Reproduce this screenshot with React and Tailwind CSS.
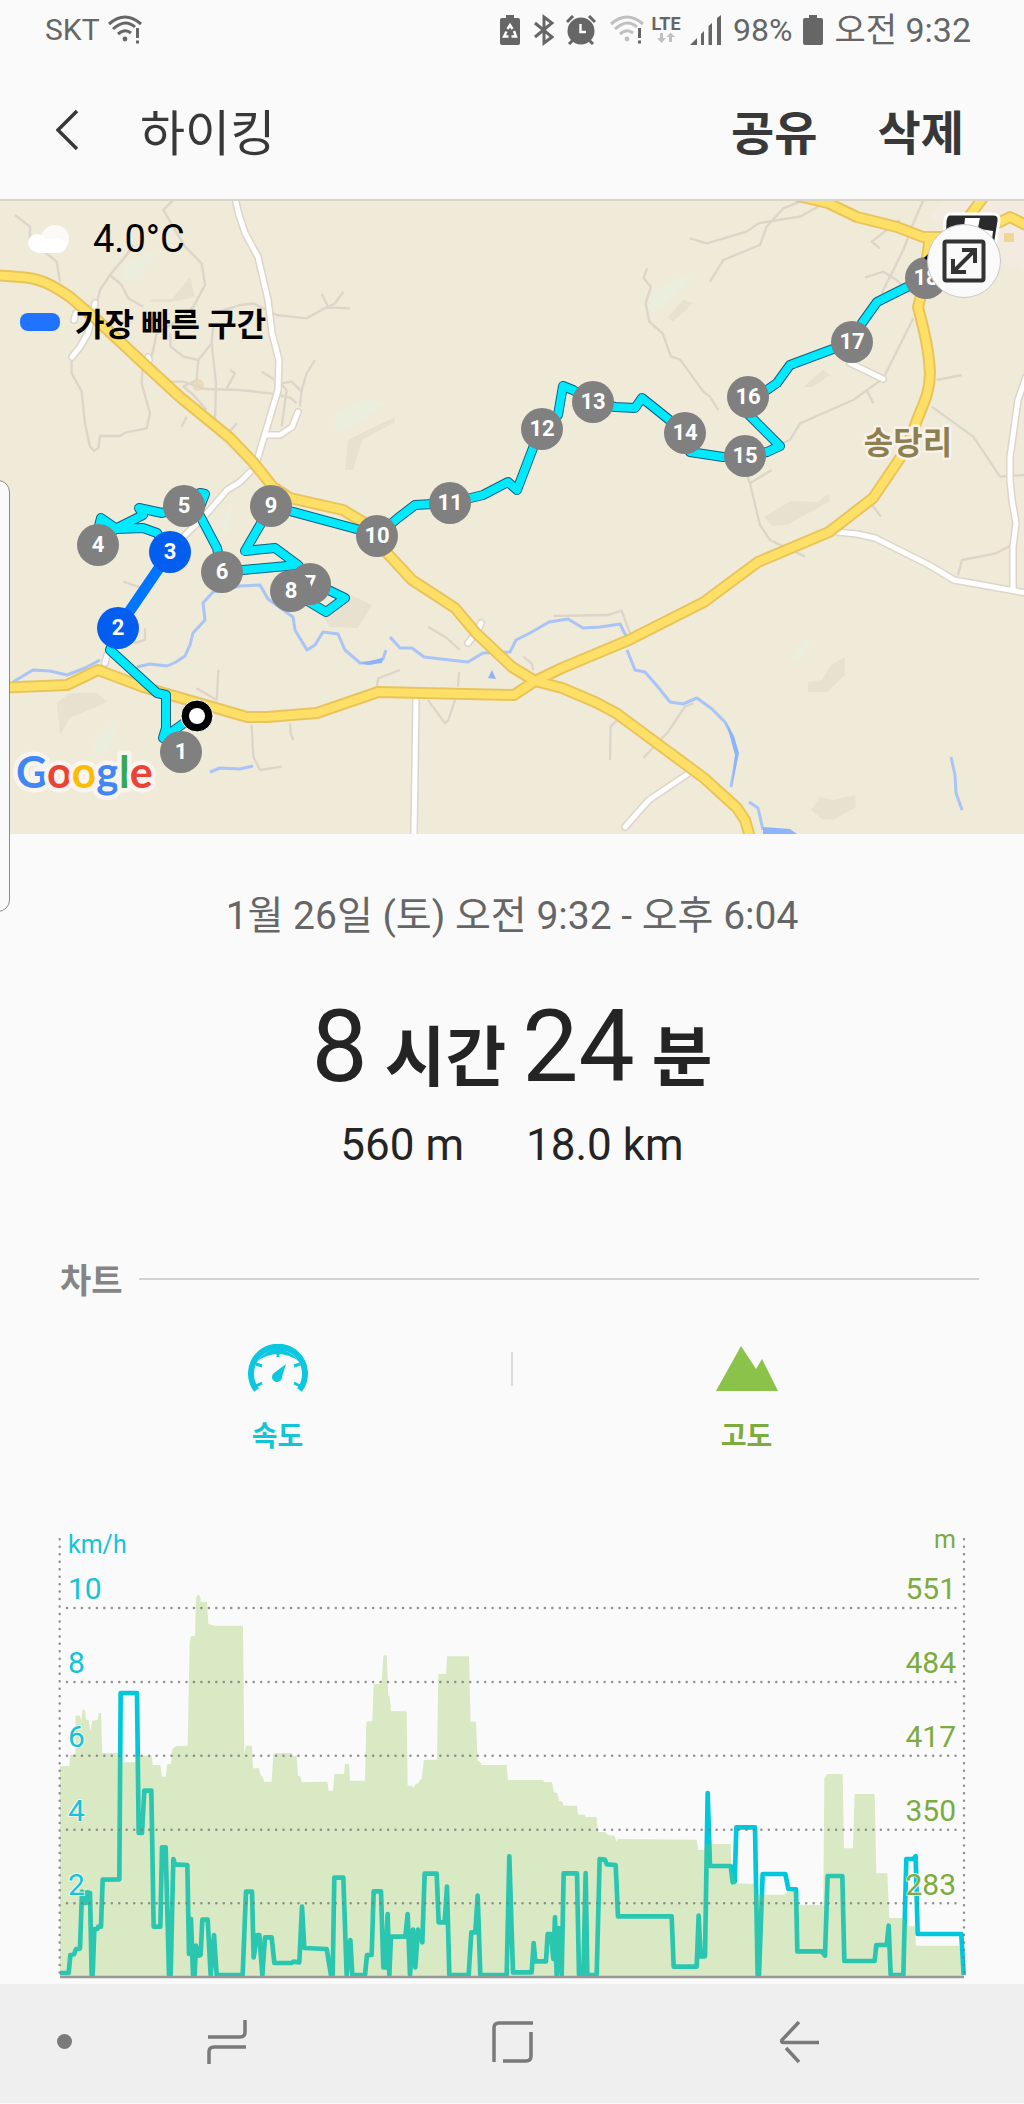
import React from "react";

const minorRoads = [
  "45,75 90,110 90,150 170,215 180,275",
  "520,30 490,60 520,110 555,170 605,220 615,285 580,350 545,385 470,430 455,500",
  "400,165 380,195 330,255 300,300 290,340",
  "330,255 365,285 385,325 430,350",
  "215,500 215,550 245,605 255,700 270,770 282,782 295,775 300,738 360,738 375,728 440,715 450,670 425,580 428,525",
  "640,370 720,345 760,340 830,375 920,385 980,352 1050,355",
  "965,312 985,352 1005,340 1030,305",
  "510,430 512,470 550,500 595,510 635,460 640,400",
  "635,460 648,580 645,690",
  "595,510 590,570 550,590 580,615 620,660",
  "500,575 550,575 615,597 720,600 810,610 870,622 890,640",
  "785,545 825,570",
  "945,510 920,550 905,600 900,650",
  "680,595 705,550 690,540",
  "710,700 685,730",
  "545,710 560,680",
  "845,710 860,600 840,580 875,575 905,605",
  "1941,235 1931,265 1953,290 1937,340 1948,395 1988,430 2013,500 2040,508 2110,605 2130,620 2155,660",
  "2220,800 2250,880 2280,1005 2310,1050 2415,1100",
  "2250,880 2315,840",
  "2070,145 2120,160 2240,125 2275,100 2335,90 2400,80 2480,35",
  "2130,275 2170,210 2280,165 2300,110 2350,55 2400,35",
  "2770,30 2740,100 2710,180 2670,260 2645,310",
  "2595,262 2650,245 2690,270 2730,310",
  "2640,175 2615,155 2660,120 2700,90",
  "2740,385 2650,565 2560,630 2400,700 2370,750 2335,765",
  "2600,600 2620,640",
  "2810,570 2885,555",
  "2795,650 2920,740 3000,860 3072,855",
  "1660,1278 1825,1275 1865,1262 1890,1330",
  "1830,1710 1832,1610 1850,1592",
  "1930,1704 2004,1626 2055,1550 2080,1540",
  "1284,1530 1335,1600 1345,1590 1365,1530",
  "1377,1446 1374,1490",
  "1284,1310 1341,1345 1380,1380",
  "1570,1400 1595,1420 1600,1440",
  "2874,1155 2886,1110 2988,1090 3036,1065",
  "2616,945 2643,980",
  "755,1605 760,1700 780,1740 845,1730",
  "870,1600 872,1630 880,1650",
  "655,1440 650,1530 590,1495",
  "370,1175 420,1192",
  "435,1315 435,1350 400,1360",
  "1130,1490 1135,1465 1200,1440",
];

const tanPatches = [
  "190,277 195,297 172,302 150,302 152,299 172,299",
  "395,417 395,422 362,440 353,470 345,470 348,440 362,433",
  "683,300 693,303 673,322 668,317",
  "323,617 347,593 372,605 358,628 330,627",
  "57,703 70,693 97,693 107,702 70,718 60,735",
  "764,517 791,501 818,502 828,494 830,501 787,525 772,526",
  "808,682 822,680 831,665 845,657 845,675 827,692 808,692",
  "811,810 820,797 833,800 855,795 856,807 833,820 822,819",
  "803,387 823,370 830,375 813,387",
];

const greenPatches = [
  "333,423 337,413 367,400 388,402 367,417 337,433",
  "123,277 127,263 147,253 160,250 133,282",
  "647,307 653,293 680,275 695,277 650,318",
  "223,520 232,500 230,530 221,538",
  "95,740 115,722 118,728 108,752 92,754",
  "792,655 806,640 812,642 797,662",
];

const rivers = [
  "13,682 33,670 50,671 67,675 85,668 100,660",
  "137,667 150,664 167,666 176,662 185,656 190,645 193,633 205,620 203,603 213,592 228,589 240,586 260,585 268,599 293,617 295,630 307,650 315,645 323,632 338,634 345,650 360,663 372,663 383,659 386,650",
  "390,637 400,648 412,648 424,657 450,660 468,662 483,653 510,652 516,640 530,633 549,622 568,619 583,628 600,627 620,624 628,640",
  "627,650 635,670 645,672 658,687 670,702 683,704 697,698 712,709 725,722 733,737 737,753 731,787",
  "749,802 758,808 763,830",
  "951,757 955,775 956,793 962,810",
  "210,772 220,768 240,769 253,766",
];

const whiteRoads = [
  "235,198 239,215 245,233 258,257 268,300 272,333 279,360 278,390 267,427 255,467",
  "250,472 240,482 227,490 203,518 183,537",
  "267,435 280,435 292,427 298,412",
  "95,303 88,333 80,347 72,357",
  "74,320 76,313",
  "148,357 149,360",
  "107,655 105,663",
  "837,532 857,534 875,538 929,565 954,580 1026,593",
  "1026,377 1018,400 1010,457 1010,480 1012,500 1016,523 1013,547 1013,590",
  "416,699 414,836",
  "689,773 649,800 625,827",
  "850,363 883,379",
  "481,623 479,628",
  "468,643 472,638",
];

const yellowRoads = [
  "M-5 275L20 277C38 278 50 283 70 297L97 320L143 363L180 397L230 438L253 462L273 487L290 498L343 510L363 522L387 553L412 580L455 608L476 633L512 667L535 681L562 688L595 702L616 713L662 747L704 778L737 808L745 820L751 840",
  "M-5 688L67 685L98 670L143 687L247 717L267 717L317 713L378 692L514 695L535 681L562 668L629 640L704 602L758 562L829 532L873 498L907 448L917 420C923 405 930 392 930 373C929 350 924 330 918 307L922 292L930 237",
  "M798 196L828 203L857 217L897 227L923 237L942 237L1000 222L1010 217L1030 227",
  "M985 195L965 222",
];

const routeStart =
  "M194 716L163 738L166 728L166 695L157 693L110 650L118 628";
const routeRest =
  "M170 552L157 533L143 528L117 529L101 518L98 530M98 545L115 529L143 515L139 508L162 513L184 506L200 493L205 494L198 512L217 548L222 572L243 570L298 565L310 581L345 598L326 612L291 591M298 565L275 548L245 551L271 506L360 530L377 536L398 518L415 505L450 503L483 495L508 482L517 490L533 448L542 429L558 415L563 386L573 390L593 402L615 407L635 408L642 398L667 418L685 433L690 452L723 457L745 456L767 452L780 446L748 414L748 397L767 390L777 383L790 365L833 349L852 342L862 323L877 302L907 287L926 278";

const markers = [
  [1, 181, 752],
  [2, 118, 628, true],
  [3, 170, 552, true],
  [4, 98, 545],
  [5, 184, 506],
  [6, 222, 572],
  [7, 310, 584],
  [8, 291, 591],
  [9, 271, 506],
  [10, 377, 536],
  [11, 450, 503],
  [12, 542, 429],
  [13, 593, 402],
  [14, 685, 433],
  [16, 748, 397],
  [15, 745, 456],
  [17, 852, 342],
  [18, 926, 278],
];

function MapDrawing() {
  return (
    <svg viewBox="0 199 1024 635" className="block h-auto w-full" role="img" aria-label="하이킹 경로 지도">
      <rect x="0" y="199" width="1024" height="635" fill="#f0ead8" />
      <path d="M945 199H1024V272L1000 262L985 240L950 225L930 218Z" fill="#f4ebe0" />
      {tanPatches.map((p) => (
        <polygon key={p} points={p} fill="#e8e1cf" />
      ))}
      {greenPatches.map((p) => (
        <polygon key={p} points={p} fill="#ebeedd" />
      ))}
      <circle cx="198" cy="385" r="6" fill="#eadbb8" />
      <rect x="1004" y="233" width="10" height="9" fill="#f0d595" />
      <g transform="translate(0 190) scale(0.33333)" fill="none" stroke="#ddd5ca" strokeWidth="7" strokeLinejoin="round">
        {minorRoads.map((p) => (
          <polyline key={p} points={p} />
        ))}
      </g>
      <g fill="none" stroke="#a9c4f6" strokeWidth="3" strokeLinejoin="round">
        {rivers.map((p) => (
          <polyline key={p} points={p} />
        ))}
      </g>
      <path d="M726 722L734 737L739 753L732 785L735 755ZM763 827L790 829L797 834H763ZM492 670L496 679L488 678ZM360 663L383 658L382 663L368 665Z" fill="#8db4fb" />
      <g fill="none" strokeLinejoin="round" strokeLinecap="round">
        <g stroke="#ddd5ca" strokeWidth="8">
          {whiteRoads.map((p) => (
            <polyline key={p} points={p} />
          ))}
        </g>
        <g stroke="#ffffff" strokeWidth="5">
          {whiteRoads.map((p) => (
            <polyline key={p} points={p} />
          ))}
        </g>
        <g stroke="#e9c45c" strokeWidth="12">
          {yellowRoads.map((d) => (
            <path key={d} d={d} />
          ))}
        </g>
        <g stroke="#ffe067" strokeWidth="8">
          {yellowRoads.map((d) => (
            <path key={d} d={d} />
          ))}
        </g>
        <path d={routeStart + routeRest} stroke="#0d5f80" strokeWidth="10" />
        <path d={routeStart + routeRest} stroke="#00e9ff" strokeWidth="8" />
        <path d="M118 628L170 552" stroke="#0075ff" strokeWidth="11" />
      </g>
      <path d="M0 200H1024" stroke="#d9d4c6" strokeWidth="2" />
      <text x="908" y="454" textAnchor="middle" fontSize="32" fontWeight="700" fill="#8d7f52" stroke="#f8f3e8" strokeWidth="5" strokeLinejoin="round" paintOrder="stroke" className="font-['Noto_Sans_CJK_KR',sans-serif]">
        송당리
      </text>
      <g fontSize="22" fontWeight="700" textAnchor="middle" className="font-[Roboto,sans-serif]">
        {markers.map(([n, x, y, fast]) => (
          <g key={n}>
            <circle cx={x} cy={y} r="21" fill={fast ? "#035ef0" : "#808080"} />
            <text x={x} y={y + 7} fill="#ffffff">
              {n}
            </text>
          </g>
        ))}
      </g>
      <circle cx="197" cy="716" r="16" fill="#000" stroke="#fff" strokeWidth="1" />
      <circle cx="197" cy="716" r="8" fill="#fff" />
      <g>
        <path d="M950 214H993Q1000 214 999 221L995 246H944L945 221Q946 214 950 214Z" fill="#2a2a2a" stroke="#fff" strokeWidth="3" />
        <path d="M965 218H980L978 228H964ZM980 229L993 231L992 240L978 238Z" fill="#fff" />
        <path d="M924 258L930 252V262Z" fill="#000" />
      </g>
      <text x="16" y="788" fontSize="43" stroke="#f9f5ee" strokeWidth="9" strokeLinejoin="round" paintOrder="stroke" fontWeight="700" className="font-[Lato,sans-serif]">
        <tspan fill="#4285f4">G</tspan>
        <tspan fill="#ea4335">o</tspan>
        <tspan fill="#fbbc05">o</tspan>
        <tspan fill="#4285f4">g</tspan>
        <tspan fill="#34a853">l</tspan>
        <tspan fill="#ea4335">e</tspan>
      </text>
    </svg>
  );
}

function WifiAlert({ tone, className }) {
  return (
    <svg viewBox="0 0 34 30" className={className} fill="none" strokeWidth="3">
      <g stroke={tone}>
        <path d="M1 9Q17 -5 33 9" />
        <path d="M5 14Q17 3 27 12" />
        <path d="M10 19Q17 13 23 18" />
      </g>
      <circle cx="17" cy="24" r="2.4" fill={tone} />
      <path d="M29.500 13V23M29.500 25.500V28.500" stroke="#666" />
    </svg>
  );
}

function StatusBar() {
  return (
    <div className="flex h-[60px] items-center justify-between pr-[53px] pl-[45px] font-[Roboto,'Noto_Sans_CJK_KR',sans-serif] text-[#666]">
      <div className="flex items-center gap-2">
        <span className="text-[30px] leading-10">SKT</span>
        <WifiAlert tone="#666" className="h-[30px] w-[34px]" />
      </div>
      <div className="flex items-center">
        <svg viewBox="0 0 20 30" className="mr-[14px] h-[30px] w-5">
          <path d="M6 0H14V3H18Q20 3 20 5V28Q20 30 18 30H2Q0 30 0 28V5Q0 3 2 3H6Z" fill="#666" />
          <path d="M7.500 14L10 10L12.500 14M14 16L16 21.500H11.500M8.500 21.500H4L6.500 16.500" fill="none" stroke="#fff" strokeWidth="2.400" />
        </svg>
        <svg viewBox="0 0 20 32" className="mr-3 h-8 w-5" fill="none" stroke="#666" strokeWidth="3">
          <path d="M1 9L18 23L10 29V3L18 9L1 23" />
        </svg>
        <svg viewBox="0 0 30 30" className="mr-[14px] h-[30px] w-[30px]" fill="none" stroke="#666" strokeWidth="3">
          <circle cx="15" cy="16" r="13.500" fill="#666" stroke="none" />
          <path d="M1 7L7 1M29 7L23 1M3 29L7 25M27 29L23 25" />
          <path d="M14.500 9V17H20" stroke="#fff" strokeWidth="2.400" />
        </svg>
        <WifiAlert tone="#c0c0c0" className="mr-1.5 h-[30px] w-[34px]" />
        <span className="mr-2 flex w-8 flex-col items-center">
          <span className="text-[18px] leading-4 font-bold">LTE</span>
          <svg viewBox="0 0 18 12" className="h-3 w-[18px]" fill="#c0c0c0">
            <path d="M3 1H6V6H9L4.500 11L0 6H3Z M12 10V5H9.500L13.500 0.500L18 5H15V10Z" />
          </svg>
        </span>
        <svg viewBox="0 0 31 30" className="mr-3 h-[30px] w-[31px]" fill="#666">
          <path d="M0 30L7 23V30ZM11 19L14 16V30H11ZM18.500 11L22 8V30H18.500ZM27 3L31 0V30H27Z" />
        </svg>
        <span className="text-[32px] leading-10">98%</span>
        <svg viewBox="0 0 20 30" className="mx-[11px] h-[30px] w-5">
          <path d="M6 0H14V3H18Q20 3 20 5V28Q20 30 18 30H2Q0 30 0 28V5Q0 3 2 3H6Z" fill="#666" />
        </svg>
        <span className="text-[34px] leading-10 whitespace-nowrap">오전 9:32</span>
      </div>
    </div>
  );
}

function AppHeader() {
  return (
    <header className="flex h-[139px] items-center pr-[60px] pl-14 font-['Noto_Sans_CJK_KR',sans-serif] text-[#383838]">
      <button type="button" aria-label="뒤로" className="mr-[60px]">
        <svg viewBox="0 0 24 40" className="block h-10 w-6" fill="none" stroke="#383838" strokeWidth="3.500">
          <path d="M21 1L2 20L21 39" />
        </svg>
      </button>
      <h1 className="text-[49px] leading-[60px]">하이킹</h1>
      <div className="ml-auto flex gap-[60px] text-[47px] leading-[60px] font-bold">
        <button type="button">공유</button>
        <button type="button">삭제</button>
      </div>
    </header>
  );
}

function RouteMap() {
  return (
    <section className="relative">
      <MapDrawing />
      <div className="absolute top-4 left-5 flex flex-col gap-[35px] text-black">
        <div className="flex h-12 items-center gap-[23px] pl-2">
          <svg viewBox="0 0 42 28" className="h-7 w-[42px]" fill="#fff">
            <circle cx="27" cy="14" r="14" fill="#fbfaf7" />
            <circle cx="9" cy="18" r="9" />
            <rect x="4" y="14" width="34" height="14" rx="8" />
          </svg>
          <span className="font-[Roboto,sans-serif] text-[38px] leading-10">4.0°C</span>
        </div>
        <div className="flex h-12 items-center gap-[15px]">
          <span className="h-[18px] w-10 rounded-lg bg-[#2173ff]" />
          <span className="font-['Noto_Sans_CJK_KR',sans-serif] text-[32px] leading-10 font-bold whitespace-nowrap">가장 빠른 구간</span>
        </div>
      </div>
      <button
        type="button"
        aria-label="지도 확대"
        className="absolute top-[25px] right-[23px] flex size-[74px] items-center justify-center rounded-full border border-[#c9c9c9] bg-[#fafafa]"
      >
        <svg viewBox="0 0 44 44" className="size-11" fill="none" stroke="#333" strokeWidth="4">
          <rect x="2.500" y="2.500" width="39" height="39" rx="2" />
          <path d="M12 32L32 12M20 11H33V24M11 20V33H24" />
        </svg>
      </button>
      <div className="absolute top-[281px] -left-3 h-[432px] w-[22px] rounded-r-xl border border-[#8a8a88] bg-[#fafafa]" />
    </section>
  );
}

function Summary() {
  return (
    <section className="flex flex-col items-center font-[Roboto,'Noto_Sans_CJK_KR',sans-serif] text-[#242424]">
      <p className="mt-[58px] text-[39px] leading-[48px] text-[#666]">1월 26일 (토) 오전 9:32 - 오후 6:04</p>
      <p className="mt-[59px] flex h-24 items-baseline">
        <span className="text-[100px] leading-[96px]">8</span>
        <span className="ml-[17px] text-[66px] leading-[66px] font-bold">시간</span>
        <span className="ml-4 text-[100px] leading-[96px]">24</span>
        <span className="ml-[17px] text-[66px] leading-[66px] font-bold">분</span>
      </p>
      <p className="mt-6 flex gap-[62px] text-[44px] leading-[52px]">
        <span>560 m</span>
        <span>18.0 km</span>
      </p>
    </section>
  );
}

function ChartTabs() {
  return (
    <div className="font-['Noto_Sans_CJK_KR',sans-serif]">
      <div className="mt-[88px] flex items-center gap-4 pr-[45px] pl-[60px]">
        <h2 className="text-[34px] leading-10 font-bold text-[#858585]">차트</h2>
        <span className="h-0.5 flex-1 bg-[#d2d2d2]" />
      </div>
      <div className="mt-[45px] grid grid-cols-2 px-[43px] text-[28px] leading-10 font-bold">
        <button type="button" className="flex flex-col items-center gap-[22px] text-[#14c3d6]">
          <svg viewBox="0 0 60 48" className="h-12 w-[60px]" fill="none" stroke="#0cc8de">
            <path d="M8.500 46A27 27 0 1 1 51.500 46" strokeWidth="6" />
            <path d="M8 18Q30 -8 52 18Q30 2 8 18Z" fill="#0cc8de" stroke="none" />
            <path d="M30 4V13M8 20L14 22M52 20L46 22M8 42L14 39M52 42L46 39" strokeWidth="3" />
            <path d="M38 20L34 33A5 5 0 1 1 26 29Z" fill="#0cc8de" stroke="none" />
          </svg>
          <span>속도</span>
        </button>
        <button type="button" className="relative flex flex-col items-center gap-[22px] text-[#7cab3f]">
          <span className="absolute top-2 left-0 h-[34px] w-0.5 -translate-x-1/2 bg-[#dcdcdc]" />
          <svg viewBox="0 0 62 48" className="h-12 w-[62px]" fill="#8bc34a">
            <path d="M0 47L25 2L40 25L46 15L62 47Z" />
          </svg>
          <span>고도</span>
        </button>
      </div>
    </div>
  );
}

const altitude =
  "60,1374 60,742 88,740 90,708 106,706 106,590 120,590 124,605 128,572 135,572 138,602 146,602 151,635 157,605 173,602 177,582 183,582 187,702 240,702 243,730 288,730 290,710 335,710 338,738 361,738 366,773 377,773 382,735 393,735 397,690 408,681 443,680 449,370 453,352 465,350 468,235 474,226 480,232 483,248 501,248 505,315 525,320 609,320 613,705 618,680 636,680 639,748 657,748 661,767 668,773 672,788 695,788 700,705 706,702 754,702 757,712 770,712 774,770 782,773 785,790 862,788 866,815 879,815 883,765 912,765 915,735 927,735 930,785 975,785 979,608 997,606 1001,495 1025,495 1030,410 1040,408 1045,530 1049,530 1053,577 1100,577 1103,800 1115,800 1120,807 1125,797 1135,792 1140,782 1145,780 1152,722 1191,722 1195,465 1218,465 1221,412 1287,412 1292,608 1308,608 1313,725 1320,728 1325,738 1400,738 1404,783 1510,783 1512,790 1536,790 1542,820 1552,823 1557,845 1567,848 1571,860 1611,860 1614,887 1634,887 1637,894 1670,894 1674,938 1696,940 1702,948 1724,950 1729,967 1735,960 1970,962 1975,992 1992,993 1998,975 2072,975 2075,1050 2090,1093 2143,1095 2150,1127 2235,1127 2242,1118 2270,1118 2275,1158 2350,1158 2353,778 2362,765 2408,765 2412,988 2439,988 2444,825 2504,825 2509,1063 2542,1063 2548,1197 2590,1197 2605,1222 2625,1222 2628,1280 2758,1280 2772,1374";

const speed =
  "60,1362 86,1362 91,1308 102,1306 108,1290 120,1288 126,1118 132,1152 138,1152 141,1120 150,1122 155,1368 158,1368 163,1230 172,1230 175,1223 183,1223 188,1082 238,1081 242,522 291,522 296,942 306,942 313,815 334,815 341,1223 361,1223 366,985 377,985 387,1368 392,1368 400,1020 405,1036 442,1038 447,1305 453,1200 459,1368 464,1368 468,1280 475,1310 482,1308 487,1202 503,1202 512,1368 522,1248 530,1368 608,1368 618,1118 636,1118 641,1315 651,1248 658,1248 667,1368 675,1255 695,1255 703,1332 755,1332 760,1328 778,1330 786,1163 793,1287 860,1290 873,1368 878,1368 883,1076 910,1076 920,1368 931,1263 937,1368 975,1368 981,1308 995,1308 1001,1117 1023,1117 1030,1345 1036,1345 1043,1185 1048,1368 1053,1253 1096,1253 1103,1185 1110,1368 1119,1232 1126,1345 1134,1232 1147,1270 1154,1064 1190,1064 1196,1210 1214,1210 1221,1103 1228,1368 1286,1368 1294,1240 1306,1240 1313,1130 1321,1368 1400,1368 1408,1012 1419,1360 1475,1360 1481,1272 1486,1327 1518,1327 1523,1245 1533,1245 1540,1320 1545,1195 1550,1368 1556,1227 1565,1368 1571,1063 1611,1063 1617,1368 1630,1368 1637,1062 1642,1368 1670,1368 1679,1020 1695,1022 1700,1036 1727,1038 1734,1192 1895,1192 1901,1343 1970,1343 1976,1190 1982,1312 1995,1312 2003,822 2010,1041 2072,1041 2078,1090 2084,1088 2089,925 2145,925 2153,1368 2157,1368 2168,1065 2236,1065 2245,1110 2268,1111 2272,1297 2345,1297 2355,1310 2363,1071 2407,1071 2413,1326 2504,1326 2509,1278 2540,1278 2546,1220 2552,1368 2590,1368 2599,1020 2620,1020 2627,1012 2633,1245 2764,1245 2771,1368";

const ticks = [
  [1600, 10, 551],
  [1674, 8, 484],
  [1748, 6, 417],
  [1822, 4, 350],
  [1896, 2, 283],
];

function Chart() {
  return (
    <svg viewBox="0 1515 1024 470" className="mt-[60px] block h-auto w-full font-[Roboto,sans-serif]" role="img" aria-label="속도와 고도 차트">
      <g transform="translate(40 1520) scale(0.33333)">
        <polyline points={speed} fill="none" stroke="#00c8dc" strokeWidth="14" strokeLinejoin="round" />
        <polygon points={altitude} fill="#8bc34a" opacity="0.3" />
        <g stroke="#7d7d7d" strokeOpacity="0.85" strokeWidth="7.500" strokeLinecap="round" strokeDasharray="0 22.400">
          {[267, 489, 710, 932, 1153].map((y) => (
            <path key={y} d={`M81 ${y}H2755`} />
          ))}
          <path d="M59 61V1372M2772 61V1372" />
        </g>
        <path d="M60 1374H2772" stroke="#999" strokeWidth="7" />
      </g>
      <g stroke="#fbfbfb" strokeOpacity="0.8" strokeWidth="2" paintOrder="stroke">
        <g fill="#14c3d6">
          <text x="68" y="1554" fontSize="25">km/h</text>
          {ticks.map(([y, kmh]) => (
            <text key={kmh} x="68" y={y} fontSize="30">{kmh}</text>
          ))}
        </g>
        <g fill="#7cab3f" textAnchor="end">
          <text x="956" y="1549" fontSize="25">m</text>
          {ticks.map(([y, , m]) => (
            <text key={m} x="956" y={y} fontSize="30">{m}</text>
          ))}
        </g>
      </g>
    </svg>
  );
}

function NavBar() {
  return (
    <nav className="grid h-[119px] grid-cols-[84px_1fr_1fr_1fr] items-center bg-[#efefef] pr-[82px] pb-1">
      <button type="button" aria-label="메뉴 고정" className="ml-[57px] size-[15px] rounded-full bg-[#7a7a7a]" />
      <button type="button" aria-label="최근 앱" className="justify-self-center">
        <svg viewBox="0 0 40 46" className="block h-[46px] w-10" fill="none" stroke="#7a7a7a" strokeWidth="3.500">
          <path d="M38 1V13Q38 18 33 18H1M39 28H7Q2 28 2 33V45" />
        </svg>
      </button>
      <button type="button" aria-label="홈" className="justify-self-center">
        <svg viewBox="0 0 42 42" className="block size-[42px]" fill="none" stroke="#7a7a7a" strokeWidth="3.500">
          <path d="M41 2H7Q2 2 2 7V41M39 11V35Q39 40 34 40H11" />
        </svg>
      </button>
      <button type="button" aria-label="뒤로 가기" className="justify-self-center">
        <svg viewBox="0 0 40 44" className="block h-11 w-10" fill="none" stroke="#7a7a7a" strokeWidth="3.500">
          <path d="M20 2L3 20Q2 22.500 4 22.500H40M7 28L20 42" />
        </svg>
      </button>
    </nav>
  );
}

export default function App() {
  return (
    <div className="min-h-screen overflow-hidden bg-[#fafafa]">
      <StatusBar />
      <AppHeader />
      <RouteMap />
      <Summary />
      <ChartTabs />
      <Chart />
      <NavBar />
    </div>
  );
}
